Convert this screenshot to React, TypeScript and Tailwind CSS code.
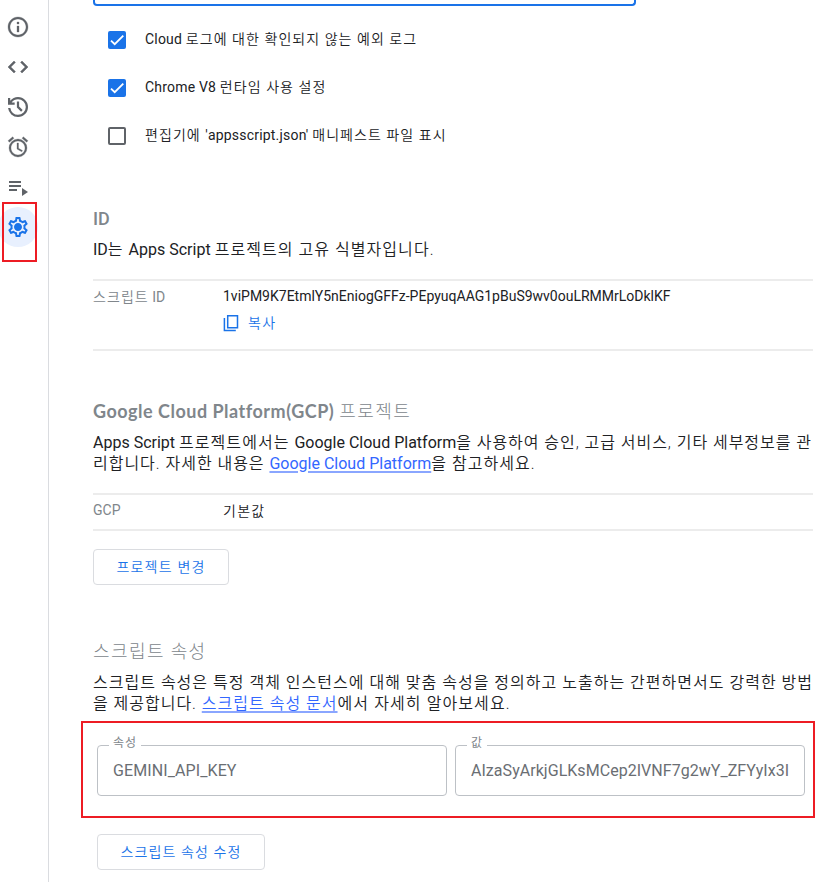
import React from "react";
import { MdInfoOutline, MdCode, MdOutlineAlarm, MdOutlineSettings } from "react-icons/md";

function Checkbox({ checked }: { checked: boolean }) {
  return checked ? (
    <span className="flex size-[18px] shrink-0 items-center justify-center rounded-[2px] bg-[#1a73e8]">
      <svg viewBox="0 0 24 24" className="-mt-px size-[14px]" fill="none" stroke="#fff" strokeWidth="3.12">
        <path d="M1.73,12.91 8.1,19.28 22.79,4.59" />
      </svg>
    </span>
  ) : (
    <span className="size-[18px] shrink-0 rounded-[2px] border-2 border-[#5f6368]" />
  );
}

function Ko({ children }: { children: React.ReactNode }) {
  return <span className="font-[350] tracking-[1.06px]">{children}</span>;
}

function Option({ checked, children }: { checked: boolean; children: React.ReactNode }) {
  return (
    <label className="flex h-12 items-center pl-[15px]">
      <Checkbox checked={checked} />
      <span className="-mt-[3px] ml-[19px] text-sm tracking-[0.2px] whitespace-nowrap">{children}</span>
    </label>
  );
}

function HistoryIcon() {
  return (
    <svg viewBox="120 -840 720 720" className="size-5" fill="currentColor">
      <path d="M480-120q-138 0-240.5-91.5T122-440h82q14 104 92.5 172T480-200q117 0 198.5-81.5T760-480q0-117-81.5-198.5T480-760q-69 0-129 32t-101 88h110v80H120v-240h80v94q51-64 124.5-99T480-840q75 0 140.5 28.5t114 77q48.5 48.5 77 114T840-480q0 75-28.5 140.5t-77 114q-48.5 48.5-114 77T480-120Zm112-192L440-464v-216h80v184l128 128-56 56Z" />
    </svg>
  );
}

function PlaylistIcon() {
  return (
    <svg viewBox="0 0 24 24" className="size-6" fill="currentColor">
      <path d="M3 6h12v2H3zM3 10h12v2H3zM3 14h8v2H3zM16 13v8l6-4z" />
    </svg>
  );
}

function Sidebar() {
  return (
    <nav className="flex w-12 shrink-0 flex-col pt-[7px] text-[24px] text-[#5f6368] [&_path[fill=none]]:stroke-none">
      <div className="flex h-10 w-9 items-center justify-center"><MdInfoOutline stroke="currentColor" strokeWidth="0.3" /></div>
      <div className="flex h-10 w-9 items-center justify-center"><MdCode stroke="currentColor" strokeWidth="0.5" /></div>
      <div className="flex h-10 w-9 items-center justify-center"><HistoryIcon /></div>
      <div className="flex h-10 w-9 items-center justify-center"><MdOutlineAlarm stroke="currentColor" strokeWidth="0.3" /></div>
      <div className="flex h-10 w-9 items-center justify-center"><PlaylistIcon /></div>
      <div className="relative flex h-10 w-9 items-center justify-center text-[#1a73e8]">
        <span className="absolute top-0 -left-0.5 size-10 rounded-full bg-[#e8f0fe]" />
        <MdOutlineSettings className="relative" />
        <span className="absolute size-[6px] rounded-full bg-[#1a73e8]" />
        <span className="absolute -top-[5px] left-[2px] h-[60px] w-[35px] border-2 border-[#ed1c24]" />
      </div>
    </nav>
  );
}

function Field({ label, value, notch, text }: { label: string; value: string; notch: string; text: string }) {
  return (
    <div className="relative h-[51px] w-[350px] rounded-[4px] border border-[#bdc1c6] px-[15px]">
      <span className={"absolute -top-[11px] left-[11px] h-4 bg-white pl-1 text-xs leading-4 text-[#80868b] " + notch}>{label}</span>
      <div className={"h-full overflow-hidden text-base leading-[50px] whitespace-nowrap text-[#6a6e73] " + text}>{value}</div>
    </div>
  );
}

const link = "text-[#3367ff] underline decoration-[#8aa6ff] decoration-2 underline-offset-2";

export default function App() {
  return (
    <div className="flex h-[882px] w-[817px] overflow-hidden bg-white font-['Roboto','Noto_Sans_CJK_KR',sans-serif] text-[#202124]">
      <Sidebar />
      <main className="flex w-[769px] shrink-0 flex-col border-l border-[#dadce0] pl-11">
        <div className="h-[6px] w-[543px] shrink-0 rounded-b-[4px] border-2 border-t-0 border-[#1a73e8]" />
        <section className="mt-[10px]">
          <Option checked>Cloud <Ko>로그에 대한 확인되지 않는 예외 로그</Ko></Option>
          <Option checked>Chrome V8 <Ko>런타임 사용 설정</Ko></Option>
          <Option checked={false}><Ko>편집기에 </Ko>'appsscript.json' <Ko>매니페스트 파일 표시</Ko></Option>
        </section>

        <section className="mt-[47px] w-[720px] whitespace-nowrap">
          <h2 className="h-6 text-lg leading-6 font-medium text-[#80868b]">ID</h2>
          <p className="mt-2 h-[21px] text-base leading-[21px]">ID<Ko>는 </Ko>Apps Script <Ko>프로젝트의 고유 식별자입니다.</Ko></p>
          <div className="mt-[19px] flex h-[72px] border-y-2 border-[#ececec] text-sm">
            <div className="w-[130px] pt-[6px] text-[#80868b]"><Ko>스크립트</Ko> ID</div>
            <div>
              <div className="h-[32px] pt-[5px]">1viPM9K7EtmlY5nEniogGFFz-PEpyuqAAG1pBuS9wv0ouLRMMrLoDklKF</div>
              <div className="flex items-center text-[#1a73e8]">
                <svg viewBox="0 0 16 18" className="-mt-px h-[18px] w-4" fill="none" stroke="#1a73e8" strokeWidth="1.5">
                  <path d="M4.7 1.7h9.8v12h-9.8zM1.4 4v12.6h11.4" />
                </svg>
                <span className="ml-[9px] font-[350] tracking-[1.3px]">복사</span>
              </div>
            </div>
          </div>
        </section>

        <section className="mt-[48px] w-[720px] whitespace-nowrap">
          <h2 className="h-6 text-lg leading-6 text-[#80868b]"><span className="font-['Lato'] font-bold tracking-[0.5px]">Google Cloud Platform(GCP) </span><span className="font-light tracking-[1.5px]">프로젝트</span></h2>
          <p className="mt-[9px] text-base leading-[21px]">
            Apps Script <Ko>프로젝트에서는 </Ko>Google Cloud Platform<span className="font-[350] tracking-[0.96px]">을 사용하여 승인, 고급 서비스, 기타 세부정보를 관</span><br />
            <span className="font-[350] tracking-[0.98px]">리합니다. 자세한 내용은 </span><a className={link}>Google Cloud Platform</a><Ko>을 참고하세요.</Ko>
          </p>
          <div className="mt-[19px] flex h-[38px] border-y-2 border-[#ececec] text-sm">
            <div className="w-[130px] pt-[5px] text-[#80868b]">GCP</div>
            <div className="pt-[6px] font-[350] tracking-[1.3px]">기본값</div>
          </div>
          <button className="mt-[18px] block h-9 w-[136px] rounded-[4px] border border-[#dadce0] text-sm font-[350] tracking-[1.2px] text-[#1a73e8]">프로젝트 변경</button>
        </section>

        <section className="mt-[55px] whitespace-nowrap">
          <h2 className="h-6 text-lg leading-6 font-light tracking-[1.4px] text-[#80868b]">스크립트 속성</h2>
          <p className="mt-2 text-base leading-[21px] font-[350] tracking-[1.02px]">
            스크립트 속성은 특정 객체 인스턴스에 대해 맞춤 속성을 정의하고 노출하는 간편하면서도 강력한 방법<br />
            <span className="tracking-[0.98px]">을 제공합니다. </span><a className={link}>스크립트 속성 문서</a><span className="tracking-[1.1px]">에서 자세히 알아보세요.</span>
          </p>
          <div className="mt-[7px] -ml-3 flex h-[97px] w-[734px] gap-2 border-2 border-[#ed1c24] pt-[22px] pl-[14px]">
            <Field label="속성" value="GEMINI_API_KEY" notch="w-8 tracking-[1px]" text="tracking-[0.1px]" />
            <Field label="값" value="AIzaSyArkjGLKsMCep2IVNF7g2wY_ZFYyIx3I" notch="w-5" text="tracking-[0.04px]" />
          </div>
          <button className="mt-4 ml-1 block h-9 w-[168px] rounded-[4px] border border-[#dadce0] text-sm font-[350] tracking-[1.1px] text-[#1a73e8]">스크립트 속성 수정</button>
        </section>
      </main>
    </div>
  );
}
